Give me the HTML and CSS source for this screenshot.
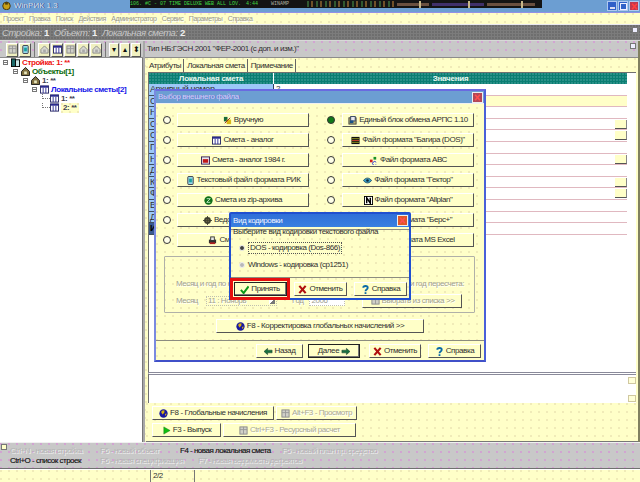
FILE: index.html
```html
<!DOCTYPE html>
<html lang="ru">
<head>
<meta charset="utf-8">
<title>WinРИК 1.3</title>
<link rel="stylesheet" href="styles.css">
</head>
<body>
<svg class="defs" width="0" height="0" aria-hidden="true">
  <symbol id="i-check" viewBox="0 0 10 10"><path d="M1 5.5 L4 9 L9.5 1.5" fill="none" stroke="#0a9a1a" stroke-width="2.2"/></symbol>
  <symbol id="i-x" viewBox="0 0 10 10"><path d="M1.5 1 L8.5 9 M8.5 1 L1.5 9" fill="none" stroke="#b01010" stroke-width="2.4"/></symbol>
  <symbol id="i-q" viewBox="0 0 10 10"><path d="M2.5 3 C2.5 .5 7.5 .5 7.5 3 C7.5 5 5 5 5 7" fill="none" stroke="#0a6aa8" stroke-width="2"/><rect x="4" y="8" width="2" height="2" fill="#0a6aa8"/></symbol>
  <symbol id="i-globe" viewBox="0 0 10 10"><circle cx="5" cy="5" r="4.6" fill="#1818a0"/><path d="M3 2 L6 1.5 L6 4 L4 6 L2.5 4 Z M6.5 5.5 L8.5 5 L7.5 8 Z" fill="#d8b010"/></symbol>
  <symbol id="i-table" viewBox="0 0 10 10"><rect x=".5" y="1" width="9" height="8" fill="#fff" stroke="#202060"/><rect x="1" y="1" width="8" height="2" fill="#2a2a90"/><path d="M3.5 3V9M6.5 3V9" stroke="#2a2a90"/></symbol>
  <symbol id="i-cal" viewBox="0 0 10 10"><rect x=".5" y="1" width="9" height="8" fill="#e8e8f0" stroke="#301850"/><rect x="2" y="3.5" width="6" height="4" fill="#c01818"/></symbol>
  <symbol id="i-hand" viewBox="0 0 10 10"><rect x="1" y="1" width="4" height="5" fill="#1a6a3a"/><rect x="4" y="4" width="5" height="5" fill="#d8b818"/><path d="M2 8 L8 2" stroke="#902020"/></symbol>
  <symbol id="i-doc" viewBox="0 0 10 10"><rect x="2" y="0.5" width="6" height="9" rx="1" fill="#9ad8e8" stroke="#303040"/><rect x="3.5" y="3" width="3" height="4" fill="#18a0a0"/></symbol>
  <symbol id="i-zip" viewBox="0 0 10 10"><circle cx="5" cy="5" r="4.6" fill="#107018"/><path d="M3 3H7L3 7H7" fill="none" stroke="#c8f0c8"/></symbol>
  <symbol id="i-box" viewBox="0 0 10 10"><rect x="1" y="2" width="8" height="7" fill="#b8b070" stroke="#404040"/><rect x="3" y=".5" width="5" height="5" fill="#e8e8f0" stroke="#304060"/><rect x="2" y="5" width="4" height="3" fill="#185088"/></symbol>
  <symbol id="i-grid" viewBox="0 0 10 10"><rect x=".5" y="1" width="9" height="8" fill="#101010"/><path d="M1 3H9M1 7H9" stroke="#a0a020"/><path d="M1 5H9" stroke="#d04030"/></symbol>
  <symbol id="i-abc" viewBox="0 0 10 10"><rect x="1" y="4" width="3" height="3" fill="#d02020"/><rect x="5" y="1" width="3" height="3" fill="#189028"/><path d="M8 7 A2.2 2.2 0 1 0 8 9.6" fill="none" stroke="#2030d0"/></symbol>
  <symbol id="i-eye" viewBox="0 0 10 10"><path d="M.5 5 C3 1.5 7 1.5 9.5 5 C7 8.5 3 8.5 .5 5Z" fill="#38a0c8" stroke="#184860"/><circle cx="5" cy="5" r="1.4" fill="#102838"/></symbol>
  <symbol id="i-n" viewBox="0 0 10 10"><rect x=".5" y=".5" width="9" height="9" fill="#fff" stroke="#000"/><path d="M3 8V2L7 8V2" fill="none" stroke="#000" stroke-width="1.6"/></symbol>
  <symbol id="i-printer" viewBox="0 0 10 10"><rect x="1" y="4" width="8" height="4" fill="#303030"/><rect x="3" y="1" width="4" height="4" fill="#e8e8e8" stroke="#303030"/><rect x="2" y="7" width="6" height="2" fill="#b02020"/></symbol>
  <symbol id="i-gear" viewBox="0 0 10 10"><circle cx="5" cy="5" r="3.8" fill="#404030"/><circle cx="5" cy="5" r="1.4" fill="#c8b878"/><path d="M5 0V10M0 5H10" stroke="#404030"/></symbol>
  <symbol id="i-arrow-l" viewBox="0 0 10 10"><path d="M0 5L4 1.5V3.5H9V6.5H4V8.5Z" fill="#187040" stroke="#103020" stroke-width=".5"/></symbol>
  <symbol id="i-arrow-r" viewBox="0 0 10 10"><path d="M10 5L6 1.5V3.5H1V6.5H6V8.5Z" fill="#187040" stroke="#103020" stroke-width=".5"/></symbol>
  <symbol id="i-play" viewBox="0 0 10 10"><path d="M2 1L9 5L2 9Z" fill="#10c010" stroke="#087008" stroke-width=".5"/></symbol>
  <symbol id="i-book" viewBox="0 0 10 10"><rect x="0.5" y="1" width="4.5" height="8.5" fill="#1a6a6a" stroke="#000"/><rect x="5" y="2" width="4.5" height="7.5" fill="#c8e8e8" stroke="#000"/></symbol>
  <symbol id="i-house" viewBox="0 0 10 10"><path d="M5 .5L9.5 5V9.5H.5V5Z" fill="#807040" stroke="#101010"/><rect x="3.5" y="5" width="3" height="3" fill="#e8e8c0"/></symbol>
  <symbol id="i-logo" viewBox="0 0 10 10"><circle cx="5" cy="5.5" r="4.2" fill="#c8a018" stroke="#403008"/><rect x="3.5" y="1" width="3" height="3" fill="#504010"/></symbol>
  <symbol id="i-faded" viewBox="0 0 10 10"><path d="M5 1L9 5V9H1V5Z" fill="#d8d8d0" stroke="#888"/><rect x="3.5" y="5" width="3" height="3" fill="#aaa"/></symbol>
  <symbol id="i-faded2" viewBox="0 0 10 10"><rect x="1" y="1" width="8" height="8" fill="#d0d0c8" stroke="#888"/><path d="M1 4H9M5 1V9" stroke="#999"/></symbol>
</svg>

<div class="app">
  <header class="titlebar">
    <svg class="app-icon"><use href="#i-logo"/></svg>
    <span class="app-name">WinРИК 1.3</span>
    <div class="winamp">
      <span class="wa-song">106. #C - 07 TIME DELUXE WEB ALL LOV.</span>
      <span class="wa-time">4:44</span>
      <span class="wa-name">WINAMP</span>
      <span class="wa-vis"></span>
      <span class="wa-track"><i></i></span>
      <span class="wa-track short"><i></i></span>
      <span class="wa-track short2"><i></i></span>
    </div>
    <div class="win-btns">
      <span class="win-btn min"></span><span class="win-btn max"></span>
      <span class="win-btn close"><svg><use href="#i-x"/></svg></span>
    </div>
  </header>

  <nav class="menu">
    <span>Проект</span><span>Правка</span><span>Поиск</span><span>Действия</span><span>Администратор</span><span>Сервис</span><span>Параметры</span><span>Справка</span>
  </nav>

  <div class="infobar">
    <span>Стройка: <b>1</b></span><span>Объект: <b>1</b></span><span>Локальная смета: <b>2</b></span>
    <span class="mini-close"></span>
  </div>

  <div class="main">
    <aside class="left">
      <div class="toolbar">
        <span class="tb"><svg><use href="#i-faded2"/></svg></span>
        <span class="tb"><svg><use href="#i-doc"/></svg></span>
        <span class="tb-sep"></span>
        <span class="tb"><svg><use href="#i-faded"/></svg></span>
        <span class="tb"><svg><use href="#i-table"/></svg></span>
        <span class="tb"><svg><use href="#i-faded2"/></svg></span>
        <span class="tb"><svg><use href="#i-faded"/></svg></span>
        <span class="tb"><svg><use href="#i-faded"/></svg></span>
        <span class="tb-sep"></span>
        <span class="tb tiny">▾</span>
        <span class="tb tiny">▴</span>
        <span class="tb tiny">⬍</span>
      </div>
      <ul class="tree">
        <li class="lvl0 red"><i class="exp"></i><svg><use href="#i-book"/></svg>Стройка: 1: **</li>
        <li class="lvl1 green"><i class="exp"></i><svg><use href="#i-house"/></svg>Объекты[1]</li>
        <li class="lvl2 dark"><i class="exp"></i><svg><use href="#i-house"/></svg>1: **</li>
        <li class="lvl3 blue"><i class="exp"></i><svg><use href="#i-table"/></svg>Локальные сметы[2]</li>
        <li class="lvl4 dark"><i class="dash"></i><svg><use href="#i-table"/></svg>1: **</li>
        <li class="lvl4 dark"><i class="dash"></i><svg><use href="#i-table"/></svg><span class="sel">2: **</span></li>
      </ul>
    </aside>

    <section class="right">
      <div class="typebar">Тип НБ:ГЭСН 2001 "ФЕР-2001 (с доп. и изм.)"<span class="mini-close"></span></div>
      <div class="tabs">
        <span class="tab">Атрибуты</span><span class="tab">Локальная смета</span><span class="tab">Примечание</span>
      </div>
      <div class="sheet">
        <div class="thead"><span class="c1">Локальная смета</span><span class="c2">Значения</span></div>
        <div class="row"><span class="c1">Архивный номер</span><span class="c2">2</span></div>
        <div class="row cream"><span class="c1">С</span><span class="c2"></span></div>
        <div class="row"><span class="c1">Н</span><span class="c2"></span></div>
        <div class="row"><span class="c1">О</span><span class="c2"><i class="dots"></i></span></div>
        <div class="row"><span class="c1">С</span><span class="c2"><i class="dots"></i></span></div>
        <div class="row"><span class="c1">П</span><span class="c2"></span></div>
        <div class="row"><span class="c1">Н</span><span class="c2"><i class="dots"></i></span></div>
        <div class="row"><span class="c1">Д</span><span class="c2"></span></div>
        <div class="row"><span class="c1">К</span><span class="c2"><i class="dots"></i></span></div>
        <div class="row"><span class="c1">Ф</span><span class="c2"><i class="dots"></i></span></div>
        <div class="row"><span class="c1">В</span><span class="c2"></span></div>
        <div class="row"><span class="c1">Д</span><span class="c2"></span></div>
        <div class="row current"><span class="c1">И</span><span class="c2"></span></div>
      </div>
      <div class="notes"><i class="nt"></i><i class="nt"></i></div>
      <div class="actions">
        <div class="act-row">
          <span class="btn w122"><svg><use href="#i-globe"/></svg>F8 - Глобальные начисления</span>
          <span class="btn w80 off"><svg><use href="#i-faded2"/></svg>Alt+F3 - Просмотр</span>
        </div>
        <div class="act-row">
          <span class="btn w69"><svg><use href="#i-play"/></svg>F3 - Выпуск</span>
          <span class="btn w132 off"><svg><use href="#i-faded2"/></svg>Ctrl+F3 - Ресурсный расчет</span>
        </div>
      </div>
    </section>
  </div>

  <div class="shortcuts">
    <i class="mini-close"></i>
    <div class="sc-row">
      <span class="sc off s90">Ctrl+N - новая стройка</span>
      <span class="sc off s80">F6 - новый объект</span>
      <span class="sc on s102">F4 - новая локальная смета</span>
      <span class="sc off">F5 - новый план пр. средство</span>
    </div>
    <div class="sc-row">
      <span class="sc on s90">Ctrl+O - список строек</span>
      <span class="sc off s98">F6 - новая спецификация</span>
      <span class="sc off">F7 - новая ведомость дефектов</span>
    </div>
  </div>

  <footer class="status"><span class="st1"></span><span class="st2">2/2</span><span class="st3"></span></footer>

  <div class="dialog big">
    <div class="dlg-title"><span>Выбор внешнего файла</span><span class="dlg-x"><svg><use href="#i-x"/></svg></span></div>
    <div class="choices">
      <i class="radio"></i><span class="btn"><svg><use href="#i-hand"/></svg>Вручную</span>
      <i class="radio on"></i><span class="btn"><svg><use href="#i-box"/></svg>Единый блок обмена АРПС 1.10</span>
      <i class="radio"></i><span class="btn"><svg><use href="#i-table"/></svg>Смета - аналог</span>
      <i class="radio"></i><span class="btn"><svg><use href="#i-grid"/></svg>Файл формата "Багира (DOS)"</span>
      <i class="radio"></i><span class="btn"><svg><use href="#i-cal"/></svg>Смета - аналог 1984 г.</span>
      <i class="radio"></i><span class="btn"><svg><use href="#i-abc"/></svg>Файл формата АВС</span>
      <i class="radio"></i><span class="btn"><svg><use href="#i-doc"/></svg>Текстовый файл формата РИК</span>
      <i class="radio"></i><span class="btn"><svg><use href="#i-eye"/></svg>Файл формата "Гектор"</span>
      <i class="radio"></i><span class="btn"><svg><use href="#i-zip"/></svg>Смета из zip-архива</span>
      <i class="radio"></i><span class="btn"><svg><use href="#i-n"/></svg>Файл формата "Allplan"</span>
      <i class="radio"></i><span class="btn"><svg><use href="#i-gear"/></svg>Ведомость ресурсов</span>
      <i class="radio"></i><span class="btn"><svg><use href="#i-table"/></svg>Файл формата "Берс+"</span>
      <i class="radio"></i><span class="btn"><svg><use href="#i-printer"/></svg>Смета из буфера</span>
      <i class="radio"></i><span class="btn"><svg><use href="#i-table"/></svg>Файл формата MS Excel</span>
    </div>
    <div class="period">
      <div class="period-head"><span>Месяц и год по нормам</span><span>Месяц и год пересчета:</span></div>
      <div class="period-row">
        <span>Месяц</span><span class="field month">11 : Ноябрь<i class="caret"></i></span>
        <span>Год</span><span class="field year">2006</span>
        <span class="btn list"><svg><use href="#i-faded2"/></svg>Выбрать из списка &gt;&gt;</span>
      </div>
    </div>
    <span class="btn f8"><svg><use href="#i-globe"/></svg>F8 - Корректировка глобальных начислений &gt;&gt;</span>
    <div class="dlg-foot">
      <span class="btn back"><svg><use href="#i-arrow-l"/></svg>Назад</span>
      <span class="btn next">Далее<svg><use href="#i-arrow-r"/></svg></span>
      <span class="btn cancel"><svg><use href="#i-x"/></svg>Отменить</span>
      <span class="btn help"><svg><use href="#i-q"/></svg>Справка</span>
    </div>
  </div>

  <div class="dialog encdlg">
    <div class="dlg-title"><span>Вид кодировки</span><span class="dlg-x"><svg><use href="#i-x"/></svg></span></div>
    <div class="enc-group">
      <span class="enc-legend">Выберите вид кодировки текстового файла</span>
      <label class="enc"><i class="dot on"></i><span class="focus">DOS - кодировка (Dos-866)</span></label>
      <label class="enc"><i class="dot"></i><span>Windows - кодировка (cp1251)</span></label>
    </div>
    <div class="enc-foot">
      <span class="hl"><span class="btn ok"><svg><use href="#i-check"/></svg>Принять</span></span>
      <span class="btn cancel"><svg><use href="#i-x"/></svg>Отменить</span>
      <span class="btn help"><svg><use href="#i-q"/></svg>Справка</span>
    </div>
  </div>
</div>
</body>
</html>
```

FILE: styles.css
```css
* { box-sizing: border-box; }
html, body { margin: 0; padding: 0; background: #fff; }
body { font: 8px/10px "Liberation Sans", Arial, sans-serif; letter-spacing: -.42px; color: #303030; overflow: hidden; }
.defs { position: absolute; }
svg { display: block; flex: none; }
i { font-style: normal; display: block; }

.app { position: relative; width: 640px; height: 482px; overflow: hidden; display: flex; flex-direction: column; }

/* shared dither pattern */
.menu, .right, .status, .dialog, .sel, .tabs, .actions {
  background-color: #ffffc8;
  background-image: radial-gradient(circle at 1px 1px, #e8e0b0 .6px, transparent .9px);
  background-size: 8px 8px;
}

.titlebar { height: 13px; display: flex; align-items: flex-start; background: #6c9ed2; border-bottom: 1px solid #9090e8; padding-left: 2px; }
.app-icon { width: 9px; height: 9px; margin: 1px 3px 0 0; }
.app-name { width: 116px; padding-top: 1px; color: #d8e0f0; font-size: 8px; letter-spacing: .1px; text-shadow: 1px 0 #40508a; }
.winamp { width: 412px; height: 8px; background: #141414; display: flex; align-items: center; font: 5px/8px "Liberation Mono", monospace; letter-spacing: 0; color: #40d840; overflow: hidden; white-space: nowrap; }
.wa-song { width: 112px; overflow: hidden; }
.wa-time { width: 25px; padding-left: 4px; }
.wa-name { width: 40px; color: #b0b0a0; padding-left: 4px; }
.wa-vis { width: 87px; height: 6px; background: repeating-linear-gradient(90deg, #305830 0 2px, #141414 2px 4px, #705028 4px 6px, #141414 6px 9px); }
.wa-track { position: relative; width: 32px; height: 3px; margin-left: 3px; background: #6a5040; }
.wa-track i { position: absolute; left: 70%; top: -2px; width: 2px; height: 7px; background: #c8b888; }
.wa-track.short { width: 52px; background: #40306a; }
.wa-track.short2 { width: 48px; background: #6a5040; }
.win-btns { margin-left: auto; display: flex; gap: 1px; padding: 1px 1px 0 0; }
.win-btn { width: 10px; height: 10px; display: flex; align-items: center; justify-content: center; border: 1px solid #b0c8f0; background: #3060c8; }
.win-btn.min::after { content: ""; width: 5px; height: 2px; margin-top: 4px; background: #dde; }
.win-btn.max::after { content: ""; width: 5px; height: 5px; border: 1px solid #eef; }
.win-btn.close { background: #c03850; }
.win-btn.close svg { width: 7px; height: 7px; filter: brightness(4); }

.menu { height: 11px; display: flex; gap: 5.5px; padding-left: 3px; align-items: center; color: #989888; font-size: 7px; letter-spacing: -.42px; white-space: nowrap; }
.menu span { text-shadow: 1px 1px #fff; }

.infobar { position: relative; height: 17px; display: flex; align-items: center; gap: 5px; padding-left: 2px; background-color: #7c7c7c; background-image: radial-gradient(circle at 1px 1px, #6e6e6e .7px, transparent 1px); background-size: 3px 3px; color: #c8c8c8; font: italic 9.5px/13px "Liberation Sans", Arial, sans-serif; letter-spacing: -.4px; border-top: 1px solid #e8e8f0; border-bottom: 1px solid #d8d8d8; }
.infobar b { font-style: normal; color: #f0f0f0; }
.mini-close { position: absolute; right: 2px; top: 2px; width: 6px; height: 6px; background: #eef; border: 1px solid #777; }

.main { flex: 1; display: flex; min-height: 0; }
.left { width: 145px; display: flex; flex-direction: column; border-right: 2px solid #a8a8a8; }
.toolbar { height: 17px; display: flex; align-items: center; padding: 1px 0 0 6px; gap: 1px; background-color: #c8c8c8; border-bottom: 1px solid #8c8c8c; background-image: radial-gradient(circle at 1px 1px, #d890d8 .6px, transparent .9px); background-size: 8px 8px; }
.tb { width: 12px; height: 14px; display: flex; align-items: center; justify-content: center; background: #f0f0c0; border: 1px solid; border-color: #fff #555 #555 #fff; color: #111; font-size: 8px; letter-spacing: 0; }
.tb svg { width: 9px; height: 9px; }
.tb.tiny { width: 10px; }
.tb-sep { width: 1px; height: 15px; margin: 0 2px 0 2px; background: #777; }

.tree { flex: 1; margin: 0; padding: 0; list-style: none; background: #fff; font-size: 8px; font-weight: 700; letter-spacing: -.4px; border-right: 1px solid #777; }
.tree li { height: 9px; display: flex; align-items: center; white-space: nowrap; }
.tree svg { width: 9px; height: 9px; margin-right: 2px; }
.exp { width: 5px; height: 5px; margin-right: 3px; border: 1px solid #777; background: linear-gradient(#777,#777) center/3px 1px no-repeat; }
.dash { width: 8px; height: 5px; margin-top: -5px; border-left: 1px dotted #777; border-bottom: 1px dotted #777; }
.lvl0 { padding-left: 3px; } .lvl1 { padding-left: 13px; } .lvl2 { padding-left: 23px; } .lvl3 { padding-left: 32px; } .lvl4 { padding-left: 42px; }
.red { color: #ee1111; } .green { color: #0a6a0a; } .dark { color: #404050; } .blue { color: #1414e8; }
.sel { padding: 0 2px; }

.right { flex: 1; display: flex; flex-direction: column; min-width: 0; padding-left: 1px; border-right: 2px solid #808060; }
.typebar { position: relative; height: 17px; margin-left: -1px; padding: 3px 0 0 2px; background-color: #c8c8c8; background-image: radial-gradient(circle at 1px 1px, #d890d8 .6px, transparent .9px); background-size: 8px 8px; border-bottom: 1px solid #8c8c8c; }
.tabs { height: 14px; display: flex; padding: 1px 0 0 0; }
.tab { padding: 2px 2px 0 3px; border-right: 1px solid #666; }

.sheet { height: 300px; margin: 0 2px 0 2px; background: #fff; border-left: 1px solid #707070; border-top: 1px solid #707070; }
.thead { display: flex; height: 11px; color: #e8f8f0; font-weight: 700; letter-spacing: -.25px; text-align: center; line-height: 11px; }
.thead span { background-color: #0a7e72; background-image: radial-gradient(circle at 1px 1px, #2a9088 .7px, transparent 1px); background-size: 3px 3px; }
.c1 { width: 125px; flex: none; white-space: nowrap; overflow: hidden; }
.c2 { width: 353px; flex: none; position: relative; }
.thead .c1 { border-right: 1px solid #fff; }
.row { display: flex; height: 11.6px; line-height: 10px; }
.row .c1 { background: #9cc8f8; padding-left: 1px; border-bottom: 1px solid #405060; border-right: 1px solid #304060; font-size: 9px; }
.row:first-of-type .c1 { font-size: 8px; }
.row .c2 { padding-left: 2px; border-bottom: 1px solid #e0b8c0; }
.row.cream .c2 { background: #ffffc8; }
.row.current .c1 { background: #3a5a90; color: #000; font-weight: 700; }
.dots { position: absolute; right: 0; top: 1px; width: 12px; height: 9px; background: #ffffc8; border-right: 1px solid #888; border-bottom: 1px solid #555; }

.notes { height: 31px; margin: 0 2px 0 2px; padding: 2px 0 1px 0; background: #fff; border-top: 3px double #8a8a9a; border-left: 1px solid #707070; display: flex; flex-direction: column; justify-content: space-between; align-items: flex-end; }
.nt { width: 8px; height: 7px; background: #ffffd8; border: 1px solid #d0c8a0; }

.actions { flex: 1; padding: 3px 0 0 6px; display: flex; flex-direction: column; gap: 3px; border-bottom: 1px solid #777; }
.act-row { display: flex; gap: 2px; }

.btn { height: 14px; display: flex; align-items: center; justify-content: center; gap: 2px; background: #ffffc8; border: 1px solid; border-color: #fff #555 #555 #fff; line-height: 10px; white-space: nowrap; overflow: hidden; color: #303030; }
.btn svg { width: 9px; height: 9px; }
.btn.off { color: #a8a898; text-shadow: 1px 1px #fff; }
.w122 { width: 122px; } .w80 { width: 81px; } .w69 { width: 69px; } .w132 { width: 133px; }

.shortcuts { position: relative; height: 27px; padding: 3px 0 0 10px; background-color: #c8c8c8; background-image: radial-gradient(circle at 1px 1px, #d890d8 .6px, transparent .9px); background-size: 8px 8px; border-top: 1px solid #f0f0f0; border-bottom: 1px solid #707070; letter-spacing: -.5px; }
.shortcuts .mini-close { left: 1px; top: 1px; right: auto; background: #ffffc8; }
.sc-row { display: flex; height: 10px; white-space: nowrap; }
.sc.on { color: #101010; -webkit-text-stroke: .15px #101010; }
.sc.off { color: #b4b4b4; text-shadow: 1px 1px #eee; }
.s90 { width: 90px; } .s80 { width: 80px; } .s102 { width: 102px; } .s98 { width: 98px; }

.status { height: 13px; display: flex; border-top: 1px solid #fff; }
.st1 { width: 151px; border-right: 1px solid #777; }
.st2 { width: 44px; padding: 1px 0 0 2px; border-right: 1px solid #777; }
.st3 { flex: 1; }

/* dialogs */
.dialog { position: absolute; border: 2px solid; }
.dlg-title { height: 13px; display: flex; align-items: center; justify-content: space-between; padding: 0 0 0 2px; }
.dlg-x { width: 11px; height: 11px; display: flex; align-items: center; justify-content: center; margin-right: 1px; border: 1px solid #eee; background: #b04858; }
.dlg-x svg { width: 7px; height: 7px; filter: brightness(5); }

.big { left: 154px; top: 89px; width: 332px; height: 273px; border-color: #6a6ae0 #4a60d8 #4050c8 #7a8ae0; display: flex; flex-direction: column; }
.big .dlg-title { background: #6c9ed2; color: #d0d0f8; text-shadow: 1px 0 #7070d0; border-bottom: 1px solid #f0f0f0; }
.choices { margin-top: 9px; padding-left: 7px; display: grid; grid-template-columns: 8px 138px 8px 138px; grid-auto-rows: 14px; row-gap: 6px; align-items: center; }
.choices .btn { margin-left: 6px; width: 132px; }
.choices .radio:nth-child(4n+3) { margin-left: 18px; }
.choices .btn:nth-child(4n) { margin-left: 25px; }
.radio { width: 8px; height: 8px; border-radius: 50%; border: 1px solid #333; background: #ffffe8; }
.radio.on { background: #107a18; }

.period { margin: 9px 0 0 8px; width: 311px; height: 57px; border: 1px solid #b0b0a8; color: #a0a090; text-shadow: 1px 1px #fff; padding: 22px 10px 0 11px; border-radius: 1px; }
.period-head { display: flex; justify-content: space-between; height: 12px; }
.period-row { display: flex; align-items: center; height: 15px; margin-top: 2px; }
.period-row > span:nth-child(1) { width: 19px; margin-right: 11px; }
.period-row > span:nth-child(3) { margin: 0 6px 0 15px; }
.field { display: block; position: relative; height: 10px; background: #ffffc8; border: 1px dotted #c0c0b0; line-height: 8px; padding-left: 1px; }
.month { width: 71px; }
.caret { position: absolute; right: 1px; top: 1px; width: 6px; height: 6px; background: linear-gradient(135deg, #fff 50%, #777 50%); }
.year { width: 36px; background: #fff; }
.btn.list { margin-left: 17px; width: 100px; color: #a0a090; height: 14px; }
.btn.f8 { margin: 6px 0 0 60px; width: 208px; flex: none; }
.dlg-foot { margin-top: 7px; height: 19px; padding: 3px 0 0 100px; display: flex; border-top: 1px solid #8c8c80; }
.big .back { width: 47px; margin-right: 5px; }
.big .next { width: 52px; margin-right: 9px; border: 1px solid #222; box-shadow: inset -1px -1px #777; }
.big .cancel { width: 52px; margin-right: 7px; }
.big .help { width: 53px; }

.encdlg { left: 229px; top: 212px; width: 182px; height: 88px; border-color: #2050d0; border-radius: 2px 2px 0 0; }
.encdlg .dlg-title { background: linear-gradient(#2f6fd8,#3a80e0); color: #f0f4ff; }
.encdlg .dlg-x { background: #e05828; }
.enc-group { height: 49px; padding: 0 0 0 2px; border-bottom: 1px solid #8c8c80; border-top: 1px solid #8c8c80; margin-top: 2px; position: relative; }
.enc-legend { display: block; margin: -3px 0 0; }
.enc { display: flex; align-items: center; gap: 3px; height: 10px; margin: 6px 0 7px 6px; white-space: nowrap; }
.dot { width: 6px; height: 6px; border-radius: 50%; background: #b8b8b8; border: 1px solid #f0f0f0; }
.dot.on { background: #404040; }
.focus { border: 1px dotted #555; padding: 0 1px; }
.enc-foot { display: flex; align-items: center; height: 22px; }
.hl { width: 60px; height: 22px; display: flex; align-items: center; justify-content: center; border: 3px solid #e60f0f; margin-left: -1px; flex: none; }
.enc-foot .ok { width: 53px; height: 14px; border: 1px solid #222; box-shadow: inset -1px -1px #777; }
.enc-foot .cancel { width: 53px; margin-left: 4px; }
.enc-foot .help { width: 53px; margin-left: 7px; }
```
